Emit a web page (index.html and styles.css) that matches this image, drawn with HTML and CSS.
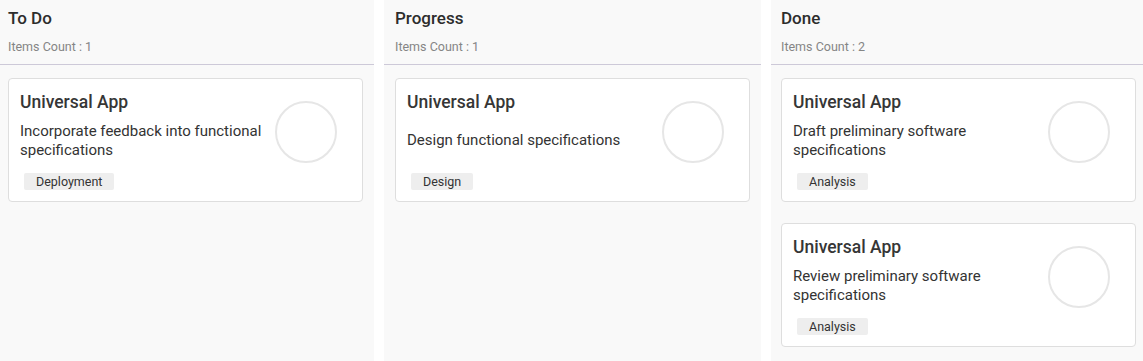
FILE: index.html
```html
<!DOCTYPE html>
<html>
<head>
<meta charset="utf-8">
<link rel="stylesheet" href="styles.css">
</head>
<body>
<div class="board">
  <section class="column col-a">
    <header class="col-head">
      <div class="col-title">To Do</div>
      <div class="col-count">Items Count : 1</div>
    </header>
    <div class="cards">
      <article class="card">
        <div class="card-body">
          <div class="card-title">Universal App</div>
          <div class="card-desc"><span>Incorporate feedback into functional specifications</span></div>
          <div class="tags"><span class="tag">Deployment</span></div>
        </div>
        <div class="avatar"></div>
      </article>
    </div>
  </section>
  <section class="column col-b">
    <header class="col-head">
      <div class="col-title">Progress</div>
      <div class="col-count">Items Count : 1</div>
    </header>
    <div class="cards">
      <article class="card">
        <div class="card-body">
          <div class="card-title">Universal App</div>
          <div class="card-desc"><span>Design functional specifications</span></div>
          <div class="tags"><span class="tag">Design</span></div>
        </div>
        <div class="avatar"></div>
      </article>
    </div>
  </section>
  <section class="column col-c">
    <header class="col-head">
      <div class="col-title">Done</div>
      <div class="col-count">Items Count : 2</div>
    </header>
    <div class="cards">
      <article class="card">
        <div class="card-body">
          <div class="card-title">Universal App</div>
          <div class="card-desc"><span>Draft preliminary software specifications</span></div>
          <div class="tags"><span class="tag">Analysis</span></div>
        </div>
        <div class="avatar"></div>
      </article>
      <article class="card">
        <div class="card-body">
          <div class="card-title">Universal App</div>
          <div class="card-desc"><span>Review preliminary software specifications</span></div>
          <div class="tags"><span class="tag">Analysis</span></div>
        </div>
        <div class="avatar"></div>
      </article>
    </div>
  </section>
</div>
</body>
</html>
```
FILE: styles.css
```css
html, body {
  margin: 0;
  padding: 0;
  background: #ffffff;
}
body {
  font-family: Roboto, "Liberation Sans", Arial, sans-serif;
  color: #333333;
}
.board {
  display: grid;
  grid-template-columns: 374px 377px 1fr;
  column-gap: 10px;
  height: 361px;
}
.column {
  background: #f9f9f9;
  display: flex;
  flex-direction: column;
}
.col-head {
  height: 65px;
  box-sizing: border-box;
  border-bottom: 1px solid #cdc9d8;
  padding: 7px 8px 0;
}
.col-b .col-head {
  padding-left: 11px;
}
.col-c .col-head {
  padding-left: 10px;
}
.col-title {
  font-size: 17px;
  font-weight: 500;
  line-height: 22px;
  color: #2d2d2d;
}
.col-count {
  margin-top: 11px;
  font-size: 12.5px;
  line-height: 14px;
  color: #858585;
}
.cards {
  display: flex;
  flex-direction: column;
  gap: 21px;
  padding: 13px 11px 0 8px;
}
.col-b .cards {
  padding-left: 11px;
}
.col-c .cards {
  padding-left: 10px;
  padding-right: 6px;
}
.card {
  width: 355px;
  box-sizing: border-box;
  height: 124px;
  background: #ffffff;
  border: 1px solid #dedede;
  border-radius: 4px;
  padding: 12px 25px 11px 11px;
  display: flex;
  align-items: flex-start;
}
.card-body {
  flex: 1;
  height: 100%;
  display: flex;
  flex-direction: column;
}
.card-title {
  font-size: 17.5px;
  font-weight: 500;
  line-height: 22px;
  color: #363636;
}
.card-desc {
  flex: 1;
  display: flex;
  align-items: center;
  padding-top: 2px;
  font-size: 15px;
  line-height: 19px;
  color: #333333;
  padding-right: 6px;
}
.tags {
  margin-top: 7px;
  padding-left: 4px;
  display: flex;
}
.tag {
  background: #eeeeee;
  border-radius: 2px;
  font-size: 12.5px;
  line-height: 17px;
  padding: 0 12px;
  color: #333333;
}
.avatar {
  flex: none;
  width: 58px;
  height: 58px;
  margin-top: 10px;
  border: 2px solid #e6e6e6;
  border-radius: 50%;
}
```
